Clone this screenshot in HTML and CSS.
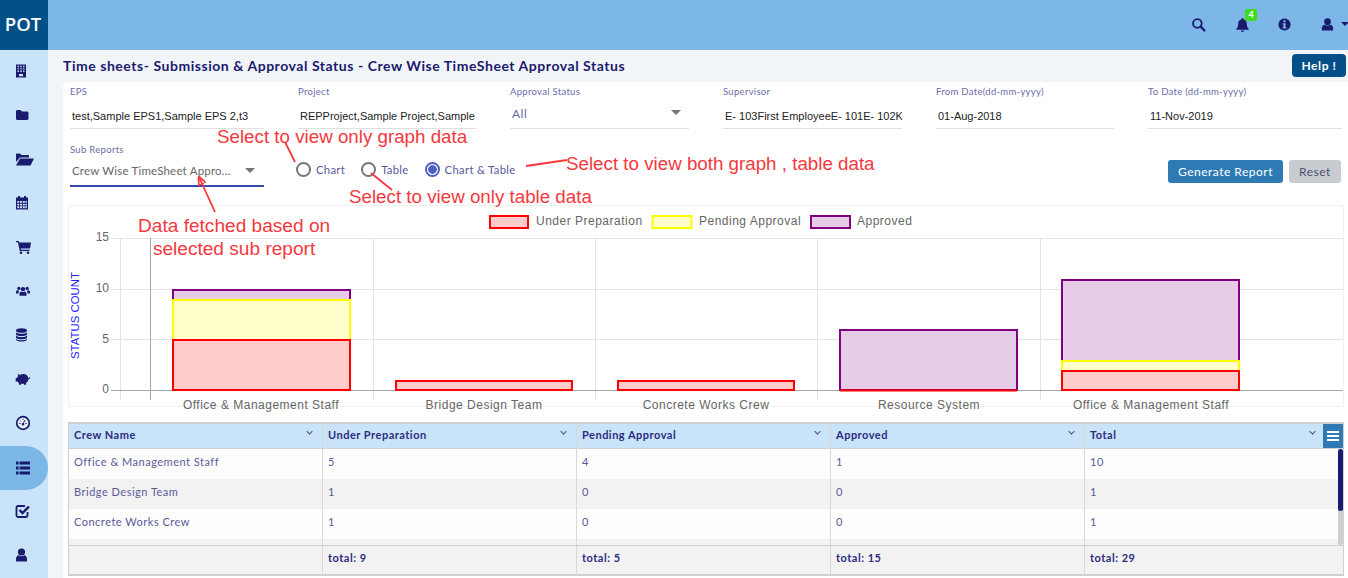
FILE: index.html
```html
<!DOCTYPE html>
<html lang="en">
<head>
    <meta charset="UTF-8">
    <title>Crew Wise TimeSheet Approval Status</title>
    <link rel="stylesheet" href="styles.css">
</head>
<body>

<header class="topbar">
    <div class="logo">POT</div>
    <div class="top-icons">
        <svg class="top-icon" viewBox="0 0 16 16"><circle cx="6.8" cy="6.8" r="4.6" fill="none" stroke="currentColor" stroke-width="2"/><path d="M10.3 10.3l4 4" stroke="currentColor" stroke-width="2.4" stroke-linecap="round"/></svg>
        <span class="bell">
            <svg class="top-icon" viewBox="0 0 16 16"><path d="M8 1a1 1 0 0 1 1 1v.4c2.2.5 3.6 2.3 3.6 4.6 0 3.200.8 4.500 2 5.800v.7H1.400v-.7c1.200-1.300 2-2.600 2-5.800 0-2.300 1.400-4.100 3.600-4.600V2a1 1 0 0 1 1-1zM6.300 14.500h3.400a1.700 1.500 0 0 1-3.400 0z" fill="currentColor"/></svg>
            <span class="badge">4</span>
        </span>
        <svg class="top-icon" viewBox="0 0 16 16"><path fill-rule="evenodd" d="M8 1.500a6.500 6.500 0 1 1 0 13 6.500 6.500 0 0 1 0-13zM6.900 3.500v2h2.200v-2zM6 6.700v1.300h.9v3H6v1.300h4V11h-.9V6.700z" fill="currentColor"/></svg>
        <span class="user-menu">
            <svg class="top-icon" viewBox="0 0 16 16"><circle cx="8" cy="5" r="3.600" fill="currentColor"/><path d="M2 14.500v-2.500c0-2.200 1.400-3.600 3-3.800 1.800 1.300 4.200 1.300 6 0 1.600.2 3 1.600 3 3.800v2.500z" fill="currentColor"/></svg>
            <span class="caret"></span>
        </span>
    </div>
</header>

<div class="layout">
    <nav class="sidebar">
        <div class="nav-item"><svg viewBox="0 0 16 16"><path fill-rule="evenodd" d="M1 1.500h10v13H1zM2.500 2.800v1.400h1.400V2.800zM5.300 2.800v1.400h1.400V2.800zM8.100 2.800v1.400h1.400V2.800zM2.500 5.200v1.400h1.400V5.200zM5.300 5.200v1.400h1.400V5.200zM8.100 5.200v1.400h1.400V5.200zM2.500 7.600V9h1.400V7.600zM5.300 7.600V9h1.400V7.600zM8.100 7.600V9h1.400V7.600zM4 11v2.200h4V11z" fill="currentColor"/></svg></div>
        <div class="nav-item"><svg viewBox="0 0 16 16"><path d="M1 4.500c0-.8.6-1.500 1.300-1.500h3.200l1.500 1.500h5c.8 0 1.500.7 1.500 1.500v5.500c0 .8-.7 1.500-1.500 1.500H2.300C1.600 13 1 12.300 1 11.500z" fill="currentColor"/></svg></div>
        <div class="nav-item"><svg viewBox="0 0 16 16"><path d="M1 11V3.500c0-.6.500-1 1-1h3L6.500 4H13c.6 0 1 .4 1 1v1.500H5zM5 7.500H19L15.500 14.500H1z" fill="currentColor"/></svg></div>
        <div class="nav-item"><svg viewBox="0 0 16 16"><path transform="translate(-1 -.5)" fill-rule="evenodd" d="M2 3h2V1.500h2V3h4V1.500h2V3h2v12H2zM3.200 6.500v1.800h2V6.500zM6 6.500v1.800h2V6.500zM8.800 6.500v1.800h2V6.500zM11.400 6.500v1.800h1.500V6.500zM3.200 9.200V11h2V9.200zM6 9.200V11h2V9.200zM8.800 9.200V11h2V9.200zM11.400 9.200V11h1.500V9.200zM3.200 11.800v1.900h2v-1.900zM6 11.800v1.900h2v-1.900zM8.800 11.800v1.900h2v-1.900zM11.400 11.800v1.900h1.500v-1.900z" fill="currentColor"/></svg></div>
        <div class="nav-item"><svg viewBox="0 0 16 16"><g transform="translate(.5 0)"><path d="M.500 2h2.800l.4 1.500H15.500l-1 6H5.200l.3 1.300h8.500v1.200H4.300L2.400 3.200H.500z" fill="currentColor"/><circle cx="5.500" cy="13.700" r="1.300" fill="currentColor"/><circle cx="12.500" cy="13.700" r="1.300" fill="currentColor"/></g></svg></div>
        <div class="nav-item"><svg viewBox="0 0 16 16"><g transform="translate(1 1) scale(.875)"><circle cx="8" cy="5.800" r="2.500" fill="currentColor"/><circle cx="3.300" cy="5" r="1.900" fill="currentColor"/><circle cx="12.700" cy="5" r="1.900" fill="currentColor"/><path d="M4 13.500v-2.300c0-1.700 1-2.600 2-2.700 1.200.8 2.800.8 4 0 1 .1 2 1 2 2.700v2.300zM0 10.800V9c0-1 .6-1.700 1.500-1.900.7.5 1.500.7 2.300.5-.5.600-.9 1.500-.9 2.700v.5zM16 10.800V9c0-1-.6-1.700-1.500-1.900-.7.5-1.500.7-2.300.5.5.6.900 1.500.900 2.700v.5z" fill="currentColor"/></g></svg></div>
        <div class="nav-item"><svg viewBox="0 0 16 16"><g transform="translate(-1.500 0)"><ellipse cx="8" cy="3.500" rx="5.500" ry="2.300" fill="currentColor"/><path d="M2.500 5.200c1.500 2 9.500 2 11 0v2.300c-1.500 2-9.500 2-11 0zM2.500 8.500c1.500 2 9.500 2 11 0v2.300c-1.500 2-9.500 2-11 0zM2.500 11.800c1.500 2 9.500 2 11 0v.7c-.5 2.800-10.500 2.800-11 0z" fill="currentColor"/></g></svg></div>
        <div class="nav-item"><svg viewBox="0 0 16 16"><path transform="translate(16 -.5) scale(-1 1)" d="M7.500 3.500c1.500 0 2.700.4 3.600 1 .6-.7 1.400-1.100 2.200-1.100l-.5 2.200c.5.500.9 1.100 1.100 1.800h1.400v3.500h-1.700c-.4.600-.9 1.100-1.500 1.500v1.900H10v-1c-1 .2-2 .2-3 0v1H4.900v-1.900C3.500 11.500 2.600 10.200 2.500 8.800 1.500 8.700.8 8 .6 7l.8-.2c.1.500.5.900 1.200 1 .3-2.500 2.300-4.300 4.900-4.300z" fill="currentColor"/></svg></div>
        <div class="nav-item"><svg viewBox="0 0 16 16"><circle cx="8" cy="8" r="6.300" fill="#e8f2fb" stroke="currentColor" stroke-width="1.700"/><path d="M8 9l2-4M4.200 8.500h1.400M8 3.700V5M5.200 5.400l.9.900M11.800 8.500h-1.400" stroke="currentColor" stroke-width="1" fill="none"/><circle cx="8" cy="9.300" r="1.200" fill="currentColor"/></svg></div>
        <div class="nav-item active"><svg viewBox="0 0 16 16"><path d="M1 1.500h2.600v3H1zM4.600 1.500H15v3H4.600zM1 6.500h2.600v3H1zM4.600 6.500H15v3H4.600zM1 11.500h2.600v3H1zM4.600 11.500H15v3H4.600z" fill="currentColor"/></svg></div>
        <div class="nav-item"><svg viewBox="0 0 16 16"><path d="M12.500 9v3.500c0 1-.8 1.500-1.500 1.500H3c-1 0-1.500-.8-1.500-1.500V4.500c0-1 .8-1.500 1.500-1.500h7" fill="none" stroke="currentColor" stroke-width="1.800"/><path d="M4.500 7L7.500 10l6.500-6.500" fill="none" stroke="currentColor" stroke-width="2.400"/></svg></div>
        <div class="nav-item"><svg viewBox="0 0 16 16"><g transform="translate(-1.500 0)"><circle cx="8" cy="5" r="3.600" fill="currentColor"/><path d="M2.500 14.500V12c0-2.200 1.200-3.600 2.800-3.800 1.700 1.300 3.700 1.300 5.400 0 1.600.2 2.800 1.600 2.800 3.800v2.500z" fill="currentColor"/></g></svg></div>
    </nav>

    <main class="content">
        <div class="title-row">
            <h1>Time sheets- Submission &amp; Approval Status - Crew Wise TimeSheet Approval Status</h1>
            <button class="btn-help">Help !</button>
        </div>

        <section class="panel">
            <div class="filters">
                <div class="field">
                    <label>EPS</label>
                    <div class="value">test,Sample EPS1,Sample EPS 2,t3</div>
                </div>
                <div class="field">
                    <label>Project</label>
                    <div class="value">REPProject,Sample Project,Sample</div>
                </div>
                <div class="field">
                    <label>Approval Status</label>
                    <div class="value select-value">All<span class="arrow"></span></div>
                </div>
                <div class="field">
                    <label>Supervisor</label>
                    <div class="value">E- 103First EmployeeE- 101E- 102K</div>
                </div>
                <div class="field">
                    <label>From Date(dd-mm-yyyy)</label>
                    <div class="value">01-Aug-2018</div>
                </div>
                <div class="field">
                    <label>To Date (dd-mm-yyyy)</label>
                    <div class="value">11-Nov-2019</div>
                </div>
            </div>

            <div class="report-row">
                <div class="field sub-report">
                    <label>Sub Reports</label>
                    <div class="value select-value">Crew Wise TimeSheet Appro...<span class="arrow"></span></div>
                </div>
                <div class="radios">
                    <span class="radio"><i></i>Chart</span>
                    <span class="radio"><i></i>Table</span>
                    <span class="radio checked"><i></i>Chart &amp; Table</span>
                </div>
                <div class="actions">
                    <button class="btn-generate">Generate Report</button>
                    <button class="btn-reset">Reset</button>
                </div>
            </div>

            <div class="chart-box">
                <svg class="chart" viewBox="69 206 1274 201">
                    <g class="grid-lines">
                        <path d="M111 238.500H1343M111 289.500H1343M111 339.500H1343"/>
                        <path d="M120.500 238V400M373.500 238V400M595.500 238V400M817.500 238V400M1040.500 238V400"/>
                    </g>
                    <path d="M150.500 238V400" class="axis"/>
                    <path d="M111 390.500H1343" class="axis"/>

                    <g class="bar-red"><rect x="396" y="381" width="176" height="9"/><rect x="618" y="381" width="176" height="9"/></g>
                    <g class="bar-purple"><rect x="173" y="290" width="177" height="10"/></g>
                    <g class="bar-yellow"><rect x="173" y="300" width="177" height="40"/></g>
                    <g class="bar-red"><rect x="173" y="340" width="177" height="50"/></g>

                    <g class="bar-purple"><rect x="840" y="330" width="177" height="60"/></g>
                    <path d="M840 390.500H1017" class="red-line"/>

                    <g class="bar-purple"><rect x="1062" y="280" width="177" height="81"/></g>
                    <g class="bar-yellow"><rect x="1062" y="361" width="177" height="10"/></g>
                    <g class="bar-red"><rect x="1062" y="371" width="177" height="19"/></g>

                    <g class="y-labels">
                        <text x="109" y="241">15</text>
                        <text x="109" y="292">10</text>
                        <text x="109" y="343">5</text>
                        <text x="109" y="393">0</text>
                    </g>
                    <text class="y-title" transform="translate(78.500 359) rotate(-90)">STATUS COUNT</text>
                    <g class="x-labels">
                        <text x="261" y="409">Office &amp; Management Staff</text>
                        <text x="484" y="409">Bridge Design Team</text>
                        <text x="706" y="409">Concrete Works Crew</text>
                        <text x="929" y="409">Resource System</text>
                        <text x="1151" y="409">Office &amp; Management Staff</text>
                    </g>

                    <g class="bar-red"><rect x="490" y="216" width="38" height="12"/></g>
                    <text class="legend" x="536" y="225">Under Preparation</text>
                    <g class="bar-yellow"><rect x="652.500" y="216" width="39" height="12"/></g>
                    <text class="legend" x="699" y="225">Pending Approval</text>
                    <g class="bar-purple"><rect x="811" y="216" width="39" height="12"/></g>
                    <text class="legend" x="857" y="225">Approved</text>
                </svg>
            </div>

            <div class="data-grid">
                <div class="grid-row grid-head">
                    <div class="cell">Crew Name<span class="chev"></span></div>
                    <div class="cell">Under Preparation<span class="chev"></span></div>
                    <div class="cell">Pending Approval<span class="chev"></span></div>
                    <div class="cell">Approved<span class="chev"></span></div>
                    <div class="cell">Total<span class="chev last"></span></div>
                    <span class="grid-menu"><i></i><i></i><i></i></span>
                </div>
                <div class="grid-body">
                    <div class="grid-row">
                        <div class="cell">Office &amp; Management Staff</div><div class="cell">5</div><div class="cell">4</div><div class="cell">1</div><div class="cell">10</div>
                    </div>
                    <div class="grid-row">
                        <div class="cell">Bridge Design Team</div><div class="cell">1</div><div class="cell">0</div><div class="cell">0</div><div class="cell">1</div>
                    </div>
                    <div class="grid-row">
                        <div class="cell">Concrete Works Crew</div><div class="cell">1</div><div class="cell">0</div><div class="cell">0</div><div class="cell">1</div>
                    </div>
                    <div class="grid-row">
                        <div class="cell"></div><div class="cell"></div><div class="cell"></div><div class="cell"></div><div class="cell"></div>
                    </div>
                    <span class="scroll-track"><span class="scroll-thumb"></span></span>
                </div>
                <div class="grid-row grid-foot">
                    <div class="cell"></div>
                    <div class="cell">total: 9</div>
                    <div class="cell">total: 5</div>
                    <div class="cell">total: 15</div>
                    <div class="cell">total: 29</div>
                </div>
            </div>
        </section>
    </main>
</div>

<!-- red notes drawn on top of the screenshot -->
<div class="note note-graph">Select to view only graph data</div>
<div class="note note-both">Select to view both graph , table data</div>
<div class="note note-table">Select to view only table data</div>
<div class="note note-sub">Data fetched based on<br>selected sub report</div>
<svg class="note-arrows" viewBox="0 0 1348 578">
    <defs>
        <marker id="head" markerWidth="9" markerHeight="8" refX="8" refY="4" orient="auto" markerUnits="userSpaceOnUse"><path d="M0 0L9 4L0 8z" fill="#f6383e"/></marker>
    </defs>
    <path d="M285 142L295 162M371 173L392 190M526 166L567 160M215 212L199 177" marker-end="url(#head)"/>
</svg>

</body>
</html>
```

FILE: styles.css
```css
* {
    box-sizing: border-box;
}
html, body {
    margin: 0;
    height: 578px;
    overflow: hidden;
}
body {
    font-family: Lato, Arial, sans-serif;
    color: #1a1a6e;
    background-color: #f1f5f8;
}

/* top bar */
.topbar {
    display: flex;
    justify-content: space-between;
    height: 50px;
    background-color: #7cb7e8;
}
.logo {
    width: 48px;
    padding-right: 2px;
    background-color: #034f88;
    color: #fff;
    font-family: "Open Sans", sans-serif;
    font-weight: 600;
    font-size: 18.5px;
    line-height: 47px;
    text-align: center;
}
.top-icons {
    display: flex;
    align-items: center;
    gap: 28px;
    padding-bottom: 2px;
    color: #1a1a6e;
}
.top-icon {
    display: block;
    width: 15px;
    height: 15px;
}
.bell {
    position: relative;
    left: 1px;
}
.badge {
    position: absolute;
    top: -8px;
    left: 10px;
    width: 12px;
    height: 12px;
    border-radius: 2px;
    background-color: #3fdc1e;
    color: #fff;
    font-size: 9px;
    font-weight: 700;
    line-height: 12px;
    text-align: center;
}
.user-menu {
    display: flex;
    align-items: center;
    gap: 6px;
}
.caret {
    width: 0;
    height: 0;
    border-left: 4px solid transparent;
    border-right: 4px solid transparent;
    border-top: 4px solid #1a1a6e;
    margin-right: -1px;
}

.layout {
    display: flex;
    height: 528px;
}

/* left nav */
.sidebar {
    width: 48px;
    flex-shrink: 0;
    background-color: #c9e4f9;
}
.nav-item {
    display: flex;
    align-items: center;
    height: 44px;
    padding-left: 15px;
    color: #1a1a6e;
}
.nav-item svg {
    width: 16px;
    height: 16px;
    margin-top: -2px;
    overflow: visible;
}
.nav-item.active {
    background-color: #7cb7e8;
    border-radius: 0 22px 22px 0;
}
.nav-item.active svg {
    margin-top: 0;
}

/* main area */
.content {
    flex: 1;
    min-width: 0;
    padding-left: 15px;
}
.title-row {
    display: flex;
    align-items: center;
    justify-content: space-between;
    height: 32px;
    padding: 0 2px 2px 0;
}
h1 {
    margin: 0;
    font-size: 14px;
    font-weight: 700;
    letter-spacing: 0.54px;
}
.btn-help {
    flex-shrink: 0;
    width: 54px;
    height: 23px;
    margin-top: 1px;
    border: none;
    border-radius: 4px;
    background-color: #034f88;
    color: #fff;
    font-family: Lato, sans-serif;
    font-size: 12px;
    font-weight: 700;
    letter-spacing: 0.6px;
}
.panel {
    height: 496px;
    padding: 0 4px 0 5px;
    background-color: #fff;
    border-radius: 4px 0 0 0;
}

/* filters */
.filters {
    display: grid;
    grid-template-columns: 194px 178px 179px 179px 178px 194px;
    column-gap: 34px;
    padding: 4px 0 0 2px;
}
.field label {
    display: block;
    height: 14px;
    font-size: 9.5px;
    letter-spacing: 0.3px;
    line-height: 11px;
    color: #6c6ca8;
}
.value {
    position: relative;
    height: 29px;
    padding: 9px 2px 0;
    border-bottom: 1px solid #e0e0e0;
    overflow: hidden;
    white-space: nowrap;
    font-family: "Liberation Sans", Arial, sans-serif;
    font-size: 11px;
    line-height: 14px;
    color: #222;
}
.select-value {
    font-family: Lato, sans-serif;
    font-size: 12px;
    letter-spacing: 0.5px;
    color: #6a6aa8;
    padding-top: 7px;
}
.arrow {
    position: absolute;
    right: 8px;
    top: 10px;
    width: 0;
    height: 0;
    border-left: 5px solid transparent;
    border-right: 5px solid transparent;
    border-top: 5px solid #757575;
}

.report-row {
    display: flex;
    align-items: flex-start;
    padding: 15px 2px 0;
}
.sub-report {
    width: 194px;
}
.sub-report label {
    height: 15px;
}
.sub-report .value {
    height: 28px;
    padding-top: 5px;
    border-bottom: 2px solid #3949ab;
    font-size: 11.5px;
    letter-spacing: 0.2px;
    color: #666;
}
.sub-report .arrow {
    right: 9px;
    top: 9px;
}
.radios {
    display: flex;
    align-items: center;
    gap: 16px;
    margin: 18px 0 0 32px;
}
.radio {
    display: flex;
    align-items: center;
    gap: 5px;
    font-size: 11.3px;
    line-height: 13px;
    letter-spacing: 0.3px;
    color: #5a5a9a;
}
.radio i {
    width: 15px;
    height: 15px;
    border: 2px solid #757575;
    border-radius: 50%;
}
.radio.checked i {
    border-color: #4f5fc0;
    background: radial-gradient(circle, #4f5fc0 0 4px, #fff 4.6px);
}
.actions {
    display: flex;
    gap: 6px;
    margin: 16px 0 0 auto;
    padding-right: 1px;
}
.actions button {
    height: 23px;
    border: none;
    border-radius: 3px;
    font-family: Lato, sans-serif;
    font-size: 12px;
    letter-spacing: 0.5px;
}
.btn-generate {
    width: 115px;
    background-color: #2e7ab5;
    color: #fff;
}
.btn-reset {
    width: 52px;
    background-color: #c8cbd0;
    color: #4f4f6f;
}

/* chart */
.chart-box {
    height: 202px;
    margin-top: 18px;
    border: 1px solid #f0f0f0;
}
.chart {
    display: block;
    width: 1274px;
    height: 201px;
    font-family: "Liberation Sans", Arial, sans-serif;
    overflow: visible;
}
.grid-lines path {
    stroke: #e3e3e3;
    fill: none;
}
.axis {
    stroke: #a8a8a8;
    fill: none;
}
.bar-red rect {
    fill: #ffcccc;
    stroke: #ff0000;
    stroke-width: 2;
}
.bar-yellow rect {
    fill: #ffffcc;
    stroke: #ffff00;
    stroke-width: 2;
}
.bar-purple rect {
    fill: #e6cce6;
    stroke: #800080;
    stroke-width: 2;
}
.red-line {
    stroke: #ff0000;
    stroke-width: 2;
}
.y-labels text {
    text-anchor: end;
    font-size: 12px;
    fill: #666;
}
.y-title {
    font-size: 11.4px;
    fill: #2222ff;
}
.x-labels text {
    text-anchor: middle;
    font-size: 12px;
    letter-spacing: 0.5px;
    fill: #666;
}
.legend {
    font-size: 12px;
    letter-spacing: 0.5px;
    fill: #666;
}

/* table */
.data-grid {
    margin-top: 15px;
    border: 1px solid #d0d0d0;
    border-width: 2px 1px 2px;
    font-size: 11px;
    letter-spacing: 0.5px;
    color: #5a5a9a;
}
.grid-row {
    display: grid;
    grid-template-columns: 254px 254px 254px 254px 1fr;
    height: 30px;
}
.cell {
    position: relative;
    padding: 6px 5px 0;
    border-right: 1px solid #d8d8d8;
    overflow: hidden;
    white-space: nowrap;
}
.cell:last-child {
    border-right: none;
}
.grid-head {
    position: relative;
    height: 25px;
    background-color: #c9e4f9;
    border-bottom: 1px solid #d0d0d0;
    font-weight: 700;
    color: #2c2c80;
}
.grid-head .cell {
    padding-top: 4px;
}
.chev {
    position: absolute;
    right: 10px;
    top: 5px;
    width: 5px;
    height: 5px;
    border-right: 1px solid #4a4a90;
    border-bottom: 1px solid #4a4a90;
    transform: rotate(45deg) scale(0.9);
}
.chev.last {
    right: 27px;
}
.grid-menu {
    position: absolute;
    right: 0;
    top: 0;
    display: flex;
    flex-direction: column;
    justify-content: center;
    gap: 2px;
    width: 20px;
    height: 24px;
    padding: 0 4px;
    background-color: #2e7ab5;
}
.grid-menu i {
    height: 2px;
    background-color: #fff;
}
.grid-body {
    position: relative;
    height: 96px;
    overflow: hidden;
    background-color: #fdfdfd;
}
.grid-body .grid-row:nth-child(even) {
    background-color: #f2f2f2;
}
.scroll-track {
    position: absolute;
    right: 0;
    top: 0;
    width: 5px;
    height: 96px;
    background-color: #cfcfcf;
    border-radius: 3px;
}
.scroll-thumb {
    display: block;
    height: 62px;
    background-color: #1a1a6e;
    border-radius: 3px;
}
.grid-foot {
    height: 29px;
    background-color: #f2f2f2;
    border-top: 1px solid #d0d0d0;
    font-weight: 700;
    color: #2c2c80;
}
.grid-foot .cell {
    padding-top: 5px;
}

/* annotations over the page */
.note {
    position: absolute;
    font-family: "Liberation Sans", Arial, sans-serif;
    font-size: 18.75px;
    line-height: 22px;
    color: #f6383e;
    white-space: nowrap;
}
.note-graph { left: 217px; top: 126px; }
.note-both { left: 566px; top: 153px; }
.note-table { left: 349px; top: 186px; }
.note-sub { left: 138px; top: 214px; font-size: 19.1px; line-height: 23px; text-align: center; }
.note-arrows {
    position: absolute;
    left: 0;
    top: 0;
    width: 1348px;
    height: 578px;
    pointer-events: none;
}
.note-arrows path {
    stroke: #f6383e;
    stroke-width: 1.8;
    fill: none;
}
```
